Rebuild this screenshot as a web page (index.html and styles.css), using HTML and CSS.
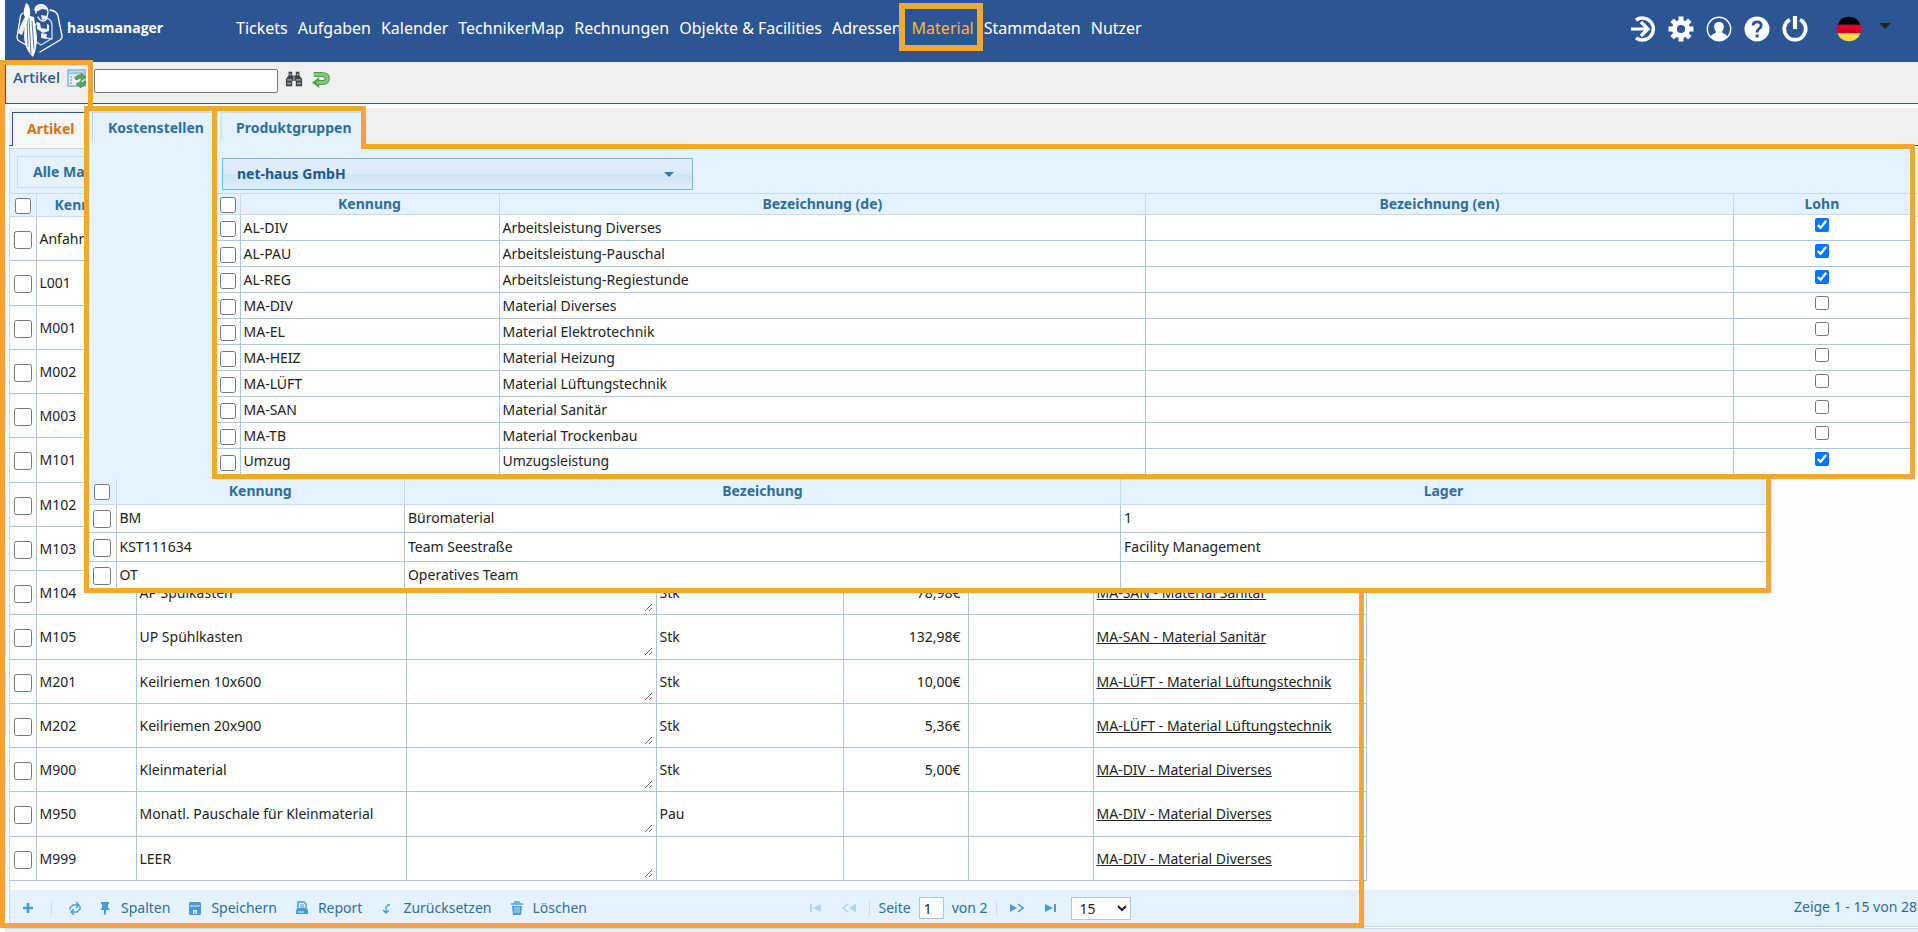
FILE: index.html
```html
<!DOCTYPE html>
<html lang="de">
<head>
<meta charset="utf-8">
<title>hausmanager – Material</title>
<link rel="stylesheet" href="styles.css">
</head>
<body>
<div class="page">
  <header class="topbar">
    <a class="brand" href="#">
      <svg class="logo" viewBox="0 0 48 58" aria-hidden="true">
        <g fill="none" stroke="#fff" stroke-width="1.3" stroke-linejoin="round" stroke-linecap="round">
          <path d="M7 12q-2 1-2.500 3L1 36q0 3 2 4l9 5M34 9q7 1 8 6l4 20q0 3-2 4L24 51"/>
          <path d="M20 12q-1-8 5-8t7 7l-1 5q-1 4-4 4-3 0-5-4"/>
          <path d="M30 17q6 1 6 8v13l-6-1M21 22l-3 4M19 40l6 4 10-6" opacity=".8"/>
        </g>
        <path d="M10 2q5 2 4 13l4 1 3 20q0 12-4 20-8-7-9-20l1-20q-2-3-1-8z" fill="#fff"/>
        <path d="M13 17l2 36M11 19l1 27M16 20l2 28" stroke="#2c5594" stroke-width=".8" fill="none"/>
        <path d="M18 9q1-6 7-6 6 0 7 6l-6-1-6 3zM25 14l6 1-1 3-4 1zM21 21l3 1 1 5 6 1v-5l2 1v6l-6 2-6-4zM25 32l6 1-1 5-5-1z" fill="#fff" opacity=".9"/>
        <path d="M2 32q3-10 7-16l2 5-5 13z" fill="#fff" opacity=".9"/>
      </svg>
      <span>hausmanager</span>
    </a>
    <nav class="mainnav">
      <a href="#">Tickets</a><a href="#">Aufgaben</a><a href="#">Kalender</a><a href="#">TechnikerMap</a><a href="#">Rechnungen</a><a href="#">Objekte &amp; Facilities</a><a href="#">Adressen</a><a href="#" class="current">Material</a><a href="#">Stammdaten</a><a href="#">Nutzer</a>
    </nav>
    <div class="tools">
      <button aria-label="Anmelden"><svg viewBox="0 0 26 26"><path d="M6 4a11 11 0 1 1 0 18" fill="none" stroke="#fff" stroke-width="3.4"/><path d="M1 13h16M11 6l7 7-7 7" fill="none" stroke="#fff" stroke-width="3.2"/></svg></button>
      <button aria-label="Einstellungen"><svg viewBox="0 0 26 26"><circle cx="13" cy="13" r="6.6" fill="none" stroke="#fff" stroke-width="5"/><g stroke="#fff" stroke-width="5"><path d="M13 .5v5M13 20.500v5M.5 13h5M20.500 13h5M4.200 4.200l3.500 3.500M18.300 18.300l3.500 3.500M4.200 21.800l3.500-3.500M18.300 7.700l3.500-3.500"/></g></svg></button>
      <button aria-label="Profil"><svg viewBox="0 0 26 26"><circle cx="13" cy="13" r="11.700" fill="none" stroke="#fff" stroke-width="1.400"/><path d="M13 6c3.500 0 5 2.400 4.800 5.400-.1 2-1 3-1.600 3.800v1.600c2 1 4.300 1.600 5 3.600A11 11 0 0 1 13 24.500a11 11 0 0 1-8.200-4.100c.7-2 3-2.600 5-3.600v-1.600c-.6-.8-1.500-1.800-1.600-3.800C8 8.400 9.500 6 13 6z" fill="#fff"/></svg></button>
      <button aria-label="Hilfe"><svg viewBox="0 0 26 26"><circle cx="13" cy="13" r="12.500" fill="#fff"/><path d="M9 9.500q.3-3.700 4.200-3.700t4 3.500q0 2-2 3.400T13 16.500" fill="none" stroke="#2c5594" stroke-width="2.800"/><path d="M11.600 18.500h3v3h-3z" fill="#2c5594"/></svg></button>
      <button aria-label="Abmelden"><svg viewBox="0 0 26 26"><path d="M8 3.600a10.700 10.700 0 1 0 10 0" fill="none" stroke="#fff" stroke-width="3.800"/><path d="M13 0v13" stroke="#fff" stroke-width="4.200"/></svg></button>
      <button class="lang" aria-label="Sprache: Deutsch"><svg viewBox="0 0 26 26"><path d="M1.500 8.700a12.300 12.300 0 0 1 23 0z" fill="#000"/><path d="M1.500 8.700h23a12.300 12.300 0 0 1 0 8.600h-23a12.300 12.300 0 0 1 0-8.600z" fill="#d80027"/><path d="M1.500 17.300h23a12.300 12.300 0 0 1-23 0z" fill="#ffda44"/></svg><i class="caret"></i></button>
    </div>
  </header>

  <div class="toolbar">
    <label class="tool-title" for="suche">Artikel</label>
    <svg class="ic20" viewBox="0 0 20 20" aria-hidden="true"><rect x="1" y="1" width="17" height="16" fill="#e9f1fb" stroke="#8aaee0" stroke-width="1.500"/><path d="M2 4h15" stroke="#a8c4ec" stroke-width="3"/><path d="M3 8h2M3 11h2M3 14h2M7 8h3" stroke="#7fa6dc" stroke-width="1.600"/><path d="M8 10q2-5 6-4V4l5 4-5 4v-3q-3 0-4 2zM19 13q-1 5-5 4v2l-5-4 5-3v2q2 0 3-2z" fill="#58a858" stroke="#357a37" stroke-width=".6"/></svg>
    <input id="suche" class="search" type="text">
    <button class="plain" aria-label="Suchen"><svg class="ic18" viewBox="0 0 20 20"><path d="M4 2h4v4h4V2h4v4l3 4v8h-7v-6H8v6H1v-8l3-4z" fill="#3e444c"/><path d="M2.500 11h5M12.500 11h5M2.500 15h4M13.500 15h4M5 5h2M13 5h2M10 7v4" stroke="#a9b0b8" stroke-width="1.400"/></svg></button>
    <button class="plain" aria-label="Zurücksetzen"><svg class="ic18" viewBox="0 0 20 20"><path d="M2 5h9q6 0 6 4.500T11 14H6" fill="none" stroke="#4f9e4f" stroke-width="5.600"/><path d="M8 8v12l-8-6z" fill="#4f9e4f"/><path d="M2 5h9q6 0 6 4.500T11 14H5" fill="none" stroke="#84c67b" stroke-width="3.200"/></svg></button>
  </div>

  <div class="tabstrip"><a href="#" class="tab-active">Artikel</a></div>

  <main class="panel">
    <div class="filter"><button class="filter-btn">Alle Mandanten</button></div>
    <div class="gridarea">
      <div class="headfill">
      <table class="main-table">
        <colgroup><col class="w26"><col class="w100"><col class="w270"><col class="w250"><col class="w187"><col class="w125"><col class="w125"><col class="w273"></colgroup>
        <thead><tr><th><input type="checkbox" class="c14" aria-label="Alle Artikel"></th><th>Kennung</th><th class="none" colspan="6"></th></tr></thead>
        <tbody>
          <tr><td><input type="checkbox" aria-label="Anfahrt"></td><td>Anfahrt</td><td></td><td></td><td></td><td></td><td></td><td></td></tr>
          <tr><td><input type="checkbox" aria-label="L001"></td><td>L001</td><td></td><td></td><td></td><td></td><td></td><td></td></tr>
          <tr><td><input type="checkbox" aria-label="M001"></td><td>M001</td><td></td><td></td><td></td><td></td><td></td><td></td></tr>
          <tr><td><input type="checkbox" aria-label="M002"></td><td>M002</td><td></td><td></td><td></td><td></td><td></td><td></td></tr>
          <tr><td><input type="checkbox" aria-label="M003"></td><td>M003</td><td></td><td></td><td></td><td></td><td></td><td></td></tr>
          <tr><td><input type="checkbox" aria-label="M101"></td><td>M101</td><td></td><td></td><td></td><td></td><td></td><td></td></tr>
          <tr><td><input type="checkbox" aria-label="M102"></td><td>M102</td><td></td><td></td><td></td><td></td><td></td><td></td></tr>
          <tr><td><input type="checkbox" aria-label="M103"></td><td>M103</td><td></td><td></td><td></td><td></td><td></td><td></td></tr>
          <tr><td><input type="checkbox" aria-label="M104"></td><td>M104</td><td>AP Spülkasten</td><td><textarea aria-label="Beschreibung M104"></textarea></td><td>Stk</td><td class="num">78,98€</td><td></td><td><a href="#">MA-SAN - Material Sanitär</a></td></tr>
          <tr><td><input type="checkbox" aria-label="M105"></td><td>M105</td><td>UP Spühlkasten</td><td><textarea aria-label="Beschreibung M105"></textarea></td><td>Stk</td><td class="num">132,98€</td><td></td><td><a href="#">MA-SAN - Material Sanitär</a></td></tr>
          <tr><td><input type="checkbox" aria-label="M201"></td><td>M201</td><td>Keilriemen 10x600</td><td><textarea aria-label="Beschreibung M201"></textarea></td><td>Stk</td><td class="num">10,00€</td><td></td><td><a href="#">MA-LÜFT - Material Lüftungstechnik</a></td></tr>
          <tr><td><input type="checkbox" aria-label="M202"></td><td>M202</td><td>Keilriemen 20x900</td><td><textarea aria-label="Beschreibung M202"></textarea></td><td>Stk</td><td class="num">5,36€</td><td></td><td><a href="#">MA-LÜFT - Material Lüftungstechnik</a></td></tr>
          <tr><td><input type="checkbox" aria-label="M900"></td><td>M900</td><td>Kleinmaterial</td><td><textarea aria-label="Beschreibung M900"></textarea></td><td>Stk</td><td class="num">5,00€</td><td></td><td><a href="#">MA-DIV - Material Diverses</a></td></tr>
          <tr><td><input type="checkbox" aria-label="M950"></td><td>M950</td><td>Monatl. Pauschale für Kleinmaterial</td><td><textarea aria-label="Beschreibung M950"></textarea></td><td>Pau</td><td></td><td></td><td><a href="#">MA-DIV - Material Diverses</a></td></tr>
          <tr><td><input type="checkbox" aria-label="M999"></td><td>M999</td><td>LEER</td><td><textarea aria-label="Beschreibung M999"></textarea></td><td></td><td></td><td></td><td><a href="#">MA-DIV - Material Diverses</a></td></tr>
        </tbody>
      </table>
      </div>
    </div>
    <footer class="pager">
      <div class="actions">
        <button aria-label="Neu"><svg viewBox="0 0 14 14"><path d="M7 2v10M2 7h10" stroke="#459bde" stroke-width="2.600"/></svg></button>
        <i class="sep"></i>
        <button aria-label="Aktualisieren"><svg viewBox="0 0 14 14"><g fill="none" stroke="#459bde" stroke-width="1.400"><path d="M2 9V7l3-3h5M8 1l3 3-3 3M12 5v3l-3 3H4M6 8l-3 3 3 3"/></g></svg></button>
        <button class="wide"><svg viewBox="0 0 14 14"><path d="M3 1h8v2l-1 .5v3L12 9H8v4l-1 1-1-1V9H2l2-2.500v-3L3 3z" fill="#459bde"/></svg>Spalten</button>
        <button class="wide"><svg viewBox="0 0 14 14"><path d="M2 1h10l1 1v11l-1 1H2l-1-1V2z" fill="#459bde"/><path d="M2 5h10" stroke="#e4f2fd"/><path d="M5 9h4v4H5z" fill="#e4f2fd"/><path d="M7 10v3" stroke="#459bde"/></svg>Speichern</button>
        <button class="wide"><svg viewBox="0 0 14 14"><path d="M3 8V1h6l2 2v5" fill="#e4f2fd" stroke="#459bde" stroke-width="1.400"/><path d="M5 4h4M5 6h4" stroke="#459bde"/><path d="M1 9l2-2h8l2 2v4H1z" fill="#459bde"/><path d="M3 11h6" stroke="#e4f2fd"/></svg>Report</button>
        <button class="wide"><svg viewBox="0 0 14 14"><path d="M10 4H8L6 6v6M3 9l3 3 3-3" fill="none" stroke="#459bde" stroke-width="1.300"/></svg>Zurücksetzen</button>
        <button class="wide"><svg viewBox="0 0 14 14"><path d="M1 3h12M5 2V1h4v1" stroke="#459bde" stroke-width="1.400" fill="none"/><path d="M2 5h10l-1 9H3z" fill="#459bde"/><path d="M5 6v6M7 6v6M9 6v6" stroke="#e4f2fd" stroke-width=".8"/></svg>Löschen</button>
      </div>
      <div class="pages">
        <button class="off" aria-label="Erste Seite"><svg viewBox="0 0 14 10"><path d="M1 1h2v8H1zM12 1v8L4 5z" fill="#459bde"/></svg></button>
        <button class="off" aria-label="Vorige Seite"><svg viewBox="0 0 14 10"><path d="M14 1v8L7 5z" fill="#459bde"/><path d="M6 1L1 5l5 4" fill="none" stroke="#459bde" stroke-width="1.500"/></svg></button>
        <i class="sep"></i>
        <label for="seite">Seite</label><input id="seite" type="text" value="1"><span>von 2</span>
        <i class="sep"></i>
        <button aria-label="Nächste Seite"><svg viewBox="0 0 14 10"><path d="M0 1v8l7-4z" fill="#459bde"/><path d="M8 1l5 4-5 4" fill="none" stroke="#459bde" stroke-width="1.500"/></svg></button>
        <button aria-label="Letzte Seite"><svg viewBox="0 0 14 10"><path d="M11 1h2v8h-2zM2 1v8l8-4z" fill="#459bde"/></svg></button>
        <select aria-label="Zeilen pro Seite"><option>15</option></select>
      </div>
      <div class="summary">Zeige 1 - 15 von 28</div>
    </footer>
  </main>
  <div class="base"></div>

  <div class="frame-tab"></div>
  <div class="frame-body"></div>

  <section class="callout cost">
    <div class="callout-tab"><a href="#">Kostenstellen</a></div>
    <div class="callout-body">
      <table class="data cost-table">
        <colgroup><col class="w27"><col class="p17"><col class="p43"><col></colgroup>
        <thead><tr><th><input type="checkbox" class="c14" aria-label="Alle Kostenstellen"></th><th>Kennung</th><th>Bezeichung</th><th>Lager</th></tr></thead>
        <tbody>
          <tr><td><input type="checkbox" aria-label="BM"></td><td>BM</td><td>Büromaterial</td><td>1</td></tr>
          <tr><td><input type="checkbox" aria-label="KST111634"></td><td>KST111634</td><td>Team Seestraße</td><td>Facility Management</td></tr>
          <tr><td><input type="checkbox" aria-label="OT"></td><td>OT</td><td>Operatives Team</td><td></td></tr>
        </tbody>
      </table>
    </div>
  </section>

  <section class="callout product">
    <div class="callout-tab"><a href="#">Produktgruppen</a></div>
    <div class="callout-body">
      <div class="picker"><select aria-label="Mandant"><option>net-haus GmbH</option></select><i class="picker-caret"></i></div>
      <table class="data product-table">
        <colgroup><col class="w23"><col class="p15"><col class="p38"><col class="p35"><col></colgroup>
        <thead><tr><th><input type="checkbox" class="c14" aria-label="Alle Produktgruppen"></th><th>Kennung</th><th>Bezeichnung (de)</th><th>Bezeichnung (en)</th><th>Lohn</th></tr></thead>
        <tbody>
          <tr><td><input type="checkbox" aria-label="AL-DIV"></td><td>AL-DIV</td><td>Arbeitsleistung Diverses</td><td></td><td><input type="checkbox" aria-label="Lohn AL-DIV" checked></td></tr>
          <tr><td><input type="checkbox" aria-label="AL-PAU"></td><td>AL-PAU</td><td>Arbeitsleistung-Pauschal</td><td></td><td><input type="checkbox" aria-label="Lohn AL-PAU" checked></td></tr>
          <tr><td><input type="checkbox" aria-label="AL-REG"></td><td>AL-REG</td><td>Arbeitsleistung-Regiestunde</td><td></td><td><input type="checkbox" aria-label="Lohn AL-REG" checked></td></tr>
          <tr><td><input type="checkbox" aria-label="MA-DIV"></td><td>MA-DIV</td><td>Material Diverses</td><td></td><td><input type="checkbox" aria-label="Lohn MA-DIV"></td></tr>
          <tr><td><input type="checkbox" aria-label="MA-EL"></td><td>MA-EL</td><td>Material Elektrotechnik</td><td></td><td><input type="checkbox" aria-label="Lohn MA-EL"></td></tr>
          <tr><td><input type="checkbox" aria-label="MA-HEIZ"></td><td>MA-HEIZ</td><td>Material Heizung</td><td></td><td><input type="checkbox" aria-label="Lohn MA-HEIZ"></td></tr>
          <tr><td><input type="checkbox" aria-label="MA-LÜFT"></td><td>MA-LÜFT</td><td>Material Lüftungstechnik</td><td></td><td><input type="checkbox" aria-label="Lohn MA-LÜFT"></td></tr>
          <tr><td><input type="checkbox" aria-label="MA-SAN"></td><td>MA-SAN</td><td>Material Sanitär</td><td></td><td><input type="checkbox" aria-label="Lohn MA-SAN"></td></tr>
          <tr><td><input type="checkbox" aria-label="MA-TB"></td><td>MA-TB</td><td>Material Trockenbau</td><td></td><td><input type="checkbox" aria-label="Lohn MA-TB"></td></tr>
          <tr><td><input type="checkbox" aria-label="Umzug"></td><td>Umzug</td><td>Umzugsleistung</td><td></td><td><input type="checkbox" aria-label="Lohn Umzug" checked></td></tr>
        </tbody>
      </table>
    </div>
  </section>
</div>
</body>
</html>
```
FILE: styles.css
```css
:root {
  --blue: #2c5594;
  --link: #2e6e9e;
  --pale: #e4f2fd;
  --line: #c5dbec;
  --cell: #a6c9e2;
  --orange: #f8a532;
  --gray: #efefef;
}
* { box-sizing: border-box; }
body {
  margin: 0;
  font: 14px/20px "Noto Sans", "Open Sans", sans-serif;
  color: #222;
  background: #fff;
}
button, input, select, textarea { font: inherit; color: inherit; margin: 0; }
button { background: none; border: 0; padding: 0; }
a { color: inherit; text-decoration: none; }
.page {
  position: relative;
  display: flex;
  flex-direction: column;
  min-height: 100vh;
  padding-left: 5px;
  overflow: hidden;
}

/* top bar */
.topbar {
  display: flex;
  align-items: flex-start;
  height: 62px;
  background: var(--blue);
  color: #fff;
}
.brand { display: flex; width: 231px; padding: 1px 0 0 11px; gap: 3px; }
.brand span { font: bold 14px/24px "Open Sans", sans-serif; padding-top: 15px; }
.logo { width: 48px; height: 58px; }
.mainnav { display: flex; gap: 10px; padding-top: 16px; font-size: 16px; line-height: 24px; white-space: nowrap; }
.current { position: relative; color: #f9b934; }
.current::after {
  content: "";
  position: absolute;
  inset: -13px -9px -11px -13px;
  border: 6px solid var(--orange);
  z-index: 2;
}
.tools { display: flex; gap: 12px; margin-left: auto; padding: 16px 27px 0 0; }
.tools svg { width: 26px; height: 26px; display: block; }
.lang { display: flex; align-items: flex-start; gap: 17px; margin-left: 16px; }
.caret { border: 6px solid transparent; border-top-color: #222; border-bottom: 0; margin-top: 7px; }

/* toolbar */
.toolbar {
  display: flex;
  gap: 7px;
  height: 42px;
  padding: 7px 0 0 7px;
  background: var(--gray);
  border-bottom: 1px solid var(--blue);
  border-left: 1px solid var(--blue);
}
.tool-title { color: var(--blue); font-size: 15px; font-weight: 500; line-height: 16px; }
.ic20 { width: 20px; height: 20px; display: block; }
.ic18 { width: 18px; height: 18px; display: block; }
.search { width: 184px; height: 24px; border: 1px solid #767676; border-radius: 2px; background: #fff; }
.plain { align-self: flex-start; padding: 1px 2px 0 0; }

/* tab strip */
.tabstrip {
  display: flex;
  height: 38px;
  margin: 4px 0 0 4px;
  padding: 4px 0 0 3px;
  background: var(--gray);
  border-bottom: 1px solid var(--blue);
}
.tab-active {
  height: 34px;
  width: 100px;
  padding: 6px 0 0 14px;
  background: #f5f8f9;
  border: 1px solid var(--blue);
  border-bottom: 0;
  color: #e17009;
  font-weight: bold;
}

/* panel */
.panel {
  margin: 2px 0 0 4px;
  border: 1px solid var(--line);
  border-right: 0;
}
.filter { height: 44px; padding: 7px; background: var(--pale); }
.filter-btn {
  height: 32px;
  width: 320px;
  padding-left: 15px;
  border: 1px solid var(--line);
  color: var(--link);
  font-weight: bold;
  text-align: left;
}
.gridarea { background: #fdfefe; padding-bottom: 9px; }
.headfill { background: linear-gradient(var(--line) 1px, var(--pale) 1px, var(--pale) 23px, var(--line) 23px, var(--line) 24px, transparent 24px); }
table { border-collapse: collapse; table-layout: fixed; }
.w23 { width: 23px; } .w26 { width: 26px; } .w27 { width: 27px; } .w100 { width: 100px; }
.w125 { width: 125px; } .w187 { width: 187px; } .w250 { width: 250px; }
.w270 { width: 270px; } .w273 { width: 273px; }
.p15 { width: 15.3%; } .p17 { width: 17.2%; } .p35 { width: 34.7%; } .p38 { width: 38.2%; } .p43 { width: 42.7%; }
td, th { padding: 0 3px; overflow: hidden; white-space: nowrap; }
td { border: 1px solid var(--cell); background: #fff; }
th { border: 1px solid var(--line); color: var(--link); background: var(--pale); }
td:first-child, th:first-child { padding: 0; text-align: center; border-left: 0; }
input[type="checkbox"] { width: 18px; height: 18px; vertical-align: middle; }
input[type="checkbox"].c14 { width: 16px; height: 16px; }
.main-table { width: 1356px; }
.main-table th { height: 23px; }
.main-table td { height: 44px; }
.main-table tr:nth-child(4n+2) td { height: 45px; }
.main-table th.none { border-left: 0; border-right: 0; }
.main-table textarea {
  display: block;
  width: 100%;
  height: 38px;
  border: 0;
  background: none;
  resize: vertical;
}
.main-table a { text-decoration: underline; }
td.num { text-align: right; padding-right: 7px; }

/* pager */
.pager {
  display: grid;
  grid-template-columns: 1fr auto 1fr;
  height: 36px;
  background: var(--pale);
  color: var(--link);
}
.actions, .pages { display: flex; align-items: center; }
.actions { gap: 16px; padding-left: 11px; }
.actions button { display: flex; align-items: center; gap: 9px; }
.actions .wide { padding-right: 2px; }
.actions svg { width: 14px; height: 14px; }
.sep { width: 1px; height: 15px; background: #d5d9e4; }
.pages { gap: 8px; padding-left: 6px; }
.pages button { width: 25px; height: 20px; }
.pages svg { width: 14px; height: 10px; }
.off { opacity: .35; }
.pages input { width: 25px; height: 22px; padding: 0 4px; border: 1px solid var(--cell); background: #fff; color: #222; }
.pages select { width: 60px; height: 23px; border: 1px solid var(--cell); background: #fff; color: #222; padding: 0 0 0 4px; }
.summary { text-align: right; padding: 7px 1px 0 0; }
.base { flex: 1; min-height: 4px; margin-top: 1px; background: var(--gray); border-top: 1px solid var(--line); }

/* highlight outline round the first tab and its panel */
.frame-tab, .frame-body, .frame-body::after { position: absolute; border: 5px solid var(--orange); pointer-events: none; }
.frame-tab { left: 0; top: 60px; width: 93px; height: 48px; border-bottom: 0; }
.frame-body { left: 0; top: 107px; width: 1364px; bottom: 4px; border-top: 0; border-right: 0; }
.frame-body::after { content: ""; right: 0; top: 480px; bottom: -5px; border-width: 0 5px 0 0; }

/* overlaid panels */
.callout { position: absolute; top: 106px; }
.callout-tab { position: relative; z-index: 1; background: var(--pale); border: 5px solid var(--orange); border-bottom: 0; font-weight: bold; color: var(--link); }
.callout-tab a { display: block; border: 1px solid var(--line); border-width: 1px 0 0 1px; height: 30px; }
.callout-body { border: 5px solid var(--orange); background: #fff; }
.data { width: 100%; }
.data th { border-top: 0; }
.data th:last-child, .data td:last-child { border-right: 0; }

.cost { left: 84px; right: 147px; z-index: 1; }
.cost .callout-tab { width: 133px; height: 373px; padding: 1px 0 0 3px; border-right: 0; }
.cost .callout-tab a { padding: 5px 0 0 15px; }
.cost .callout-body { border-top: 0; }
.cost-table th { height: 25px; }
.cost-table td { height: 28px; border-bottom: 0; }
.cost-table tr:nth-child(2) td { height: 29px; }
.cost-table tr:nth-child(3) td { height: 27px; }

.product { left: 212px; right: 3px; z-index: 2; }
.product .callout-tab { width: 154px; height: 43px; margin-bottom: -5px; padding: 1px 0 0 4px; }
.product .callout-tab a { padding: 5px 0 0 14px; }
.picker { position: relative; width: 476px; padding: 9px 0 3px 5px; }
.product .callout-body { background: var(--pale); }
.picker select {
  appearance: none;
  width: 100%;
  height: 32px;
  padding: 0 14px;
  border: 1px solid #79b7e7;
  background: linear-gradient(#e1eff9 0%, #dcebf8 50%, #cfe4f4 52%, #e0eefa 100%);
  color: #1d5987;
  font-weight: bold;
}
.picker-caret { position: absolute; right: 19px; top: 23px; border: 5px solid transparent; border-top-color: #217bc0; border-bottom: 0; }
.product-table { border-top: 1px solid var(--line); }
.product-table th { height: 21px; }
.product-table td { height: 26px; }
.product-table td input[type="checkbox"] { width: 16px; height: 16px; }
.product-table td:last-child { text-align: center; }
.product-table td:last-child input[type="checkbox"] { width: 14px; height: 14px; margin-bottom: 6px; }
.product-table tr:last-child td { border-bottom: 0; height: 25px; }
```
